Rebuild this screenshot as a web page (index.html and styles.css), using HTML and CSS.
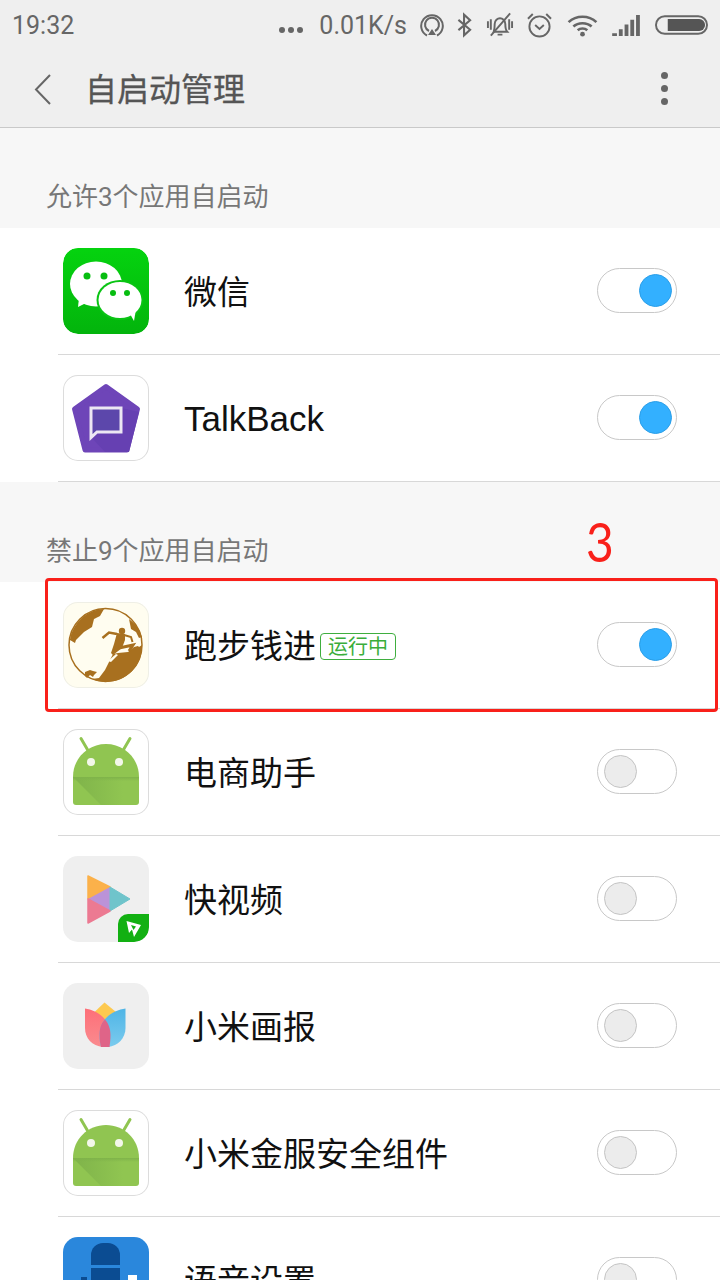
FILE: index.html
```html
<!DOCTYPE html>
<html lang="zh">
<head>
<meta charset="utf-8">
<title>自启动管理</title>
<link rel="stylesheet" href="styles.css">
</head>
<body>
<div class="screen">
  <header class="top">
    <div class="status">
      <span class="time">19:32</span>
      <div class="status-right">
        <span class="dots"><i></i><i></i><i></i></span>
        <span class="speed">0.01K/s</span>
        <svg class="si tight" width="24" height="26" viewBox="0 0 24 26"><g fill="none" stroke="#666" stroke-width="2"><path d="M7 23.500a10.800 10.800 0 1 1 10 0"/><path d="M9 19a7 7 0 1 1 6 0"/></g><path d="M12 17l4 6H8z" fill="#666"/></svg>
        <svg class="si tight" width="15" height="26" viewBox="0 0 16 26"><path d="M1.500 7.500L14 18l-6.500 6V2L14 8 1.500 18.500" fill="none" stroke="#666" stroke-width="2.200"/></svg>
        <svg class="si" width="28" height="26" viewBox="0 0 29 26"><path d="M8 20c1-3 1-6 1-8 0-4 3-6 5.500-6S20 8 20 12c0 3 0 6 2 8z" fill="none" stroke="#666" stroke-width="2"/><path d="M12 23h5M25 1L5 24" stroke="#666" stroke-width="2"/><path d="M1 9v7h2V9zM4 7v11h2V7zM23 7v11h2V7zM26 9v7h2V9z" fill="#666"/></svg>
        <svg class="si tight" width="25" height="27" viewBox="0 0 26 28"><circle cx="13" cy="15" r="10.500" fill="none" stroke="#666" stroke-width="2"/><path d="M8.500 13.500l4.500 4 4.500-4" fill="none" stroke="#666" stroke-width="2"/><path d="M1 7l5-5M25 7l-5-5" stroke="#666" stroke-width="2"/></svg>
        <svg class="si wide" width="31" height="23" viewBox="0 0 32 24"><g fill="none" stroke="#666" stroke-width="2.800"><path d="M1.500 8.500c8-7.500 21-7.500 29 0"/><path d="M6.500 13c5-4.500 14-4.500 19 0"/><path d="M11 17c2.800-2.500 7.200-2.500 10 0"/></g><circle cx="16" cy="21" r="2.500" fill="#666"/></svg>
        <svg class="si" width="29" height="21" viewBox="0 0 30 22"><path d="M0 19h5v3H0zM7 15h4v7H7zM13 10h4v12h-4zM19 5h4v17h-4zM25 0h4v22h-4z" fill="#666"/></svg>
        <svg class="si" width="53" height="20" viewBox="0 0 54 20"><rect x="1" y="1" width="52" height="18" rx="9" fill="none" stroke="#666" stroke-width="2"/><path d="M13 4h32a6 6 0 0 1 0 12H13z" fill="#555"/></svg>
      </div>
    </div>
    <div class="toolbar">
      <svg class="back" width="17" height="31" viewBox="0 0 17 31"><path d="M16 1L2 15.500 16 30" fill="none" stroke="#666" stroke-width="2"/></svg>
      <h1 class="title">自启动管理</h1>
      <span class="more"><i></i><i></i><i></i></span>
    </div>
  </header>

  <main class="content">
    <div class="section-head">允许3个应用自启动</div>
    <section class="group">
      <div class="row">
        <svg class="icon" viewBox="0 0 86 86">
          <defs><linearGradient id="wx" x1="0" y1="0" x2="0" y2="1"><stop offset="0" stop-color="#05d30f"/><stop offset="1" stop-color="#03b40c"/></linearGradient></defs>
          <rect width="86" height="86" rx="15" fill="url(#wx)"/>
          <ellipse cx="33" cy="36" rx="26" ry="22.500" fill="#fff"/>
          <path d="M16 50l-1 9 10-5z" fill="#fff"/>
          <ellipse cx="57" cy="52" rx="23.500" ry="20" fill="#0ac414"/>
          <ellipse cx="57" cy="52" rx="21.500" ry="18" fill="#fff"/>
          <path d="M66 64l5 9 2-12z" fill="#fff"/>
          <circle cx="24" cy="28" r="3.500" fill="#07bd10"/><circle cx="41" cy="28" r="3.500" fill="#07bd10"/>
          <circle cx="50" cy="45" r="3" fill="#07bd10"/><circle cx="64" cy="45" r="3" fill="#07bd10"/>
        </svg>
        <span class="name">微信</span>
        <span class="switch on"><i></i></span>
      </div>
      <div class="row">
        <svg class="icon framed" viewBox="0 0 86 86">
          <path d="M43 11.500L74.500 34 64 75H22L11.500 34z" fill="#6e45b8" stroke="#6e45b8" stroke-width="5" stroke-linejoin="round"/>
          <path d="M58 33L76 37 66 77H42L28 62z" fill="#6640b2"/>
          <path d="M28 33h30v24H34l-6 5.500z" fill="#5c47ab" stroke="#ece7f3" stroke-width="3"/>
        </svg>
        <span class="name latin">TalkBack</span>
        <span class="switch on"><i></i></span>
      </div>
    </section>

    <div class="section-head">禁止9个应用自启动</div>
    <section class="group">
      <div class="row">
        <svg class="icon cream" viewBox="0 0 86 86">
          <circle cx="42.500" cy="43" r="36.500" fill="none" stroke="#a8701f" stroke-width="1.500"/>
          <path d="M41 7l-4 7-6 3-2 8-8 5-8 8-1 3-5-3C9 22 24 7 41 7z" fill="#a8701f"/>
          <path d="M66 17c7 5 11 11 13 18l-3 1-3-6-5-3-1-5z" fill="#a8701f"/>
          <path d="M79 43c1 21-16 37-36 37-5 0-10-1-14-3l7-1 6-8 4-8 4-8 5-1 10-1 6-5 4-1 1 1z" fill="#a8701f"/>
          <circle cx="59" cy="29" r="3.200" fill="#a8701f"/>
          <path d="M54 31l8 1 0 6-3 8-9 7-2-2 3-9z" fill="#a8701f"/>
          <path d="M54 32l-8-1.500-6.500 5.500" fill="none" stroke="#a8701f" stroke-width="2.500"/>
          <path d="M61 33l7 2 1.500 5" fill="none" stroke="#a8701f" stroke-width="2"/>
          <path d="M56 46l14-3-4 6" fill="none" stroke="#a8701f" stroke-width="3"/>
          <path d="M45 59l8-7 2 1-7 7z" fill="#fffdf0"/>
          <path d="M22 70l5-2 3 1 4 1-3 3-1 2-3-2-3 3-2-2z" fill="#a8701f"/>
        </svg>
        <span class="name">跑步钱进</span>
        <span class="badge">运行中</span>
        <span class="switch on"><i></i></span>
      </div>
      <div class="row">
        <svg class="icon framed" viewBox="0 0 86 86">
          <defs>
            <linearGradient id="anshade" x1="0" y1="0" x2="1" y2="0"><stop offset="0" stop-color="#7fb34a"/><stop offset="1" stop-color="#90c551"/></linearGradient>
            <linearGradient id="anline" x1="0" y1="0" x2="0" y2="1"><stop offset="0" stop-color="#7fb34a"/><stop offset="1" stop-color="#7fb34a" stop-opacity="0"/></linearGradient>
          </defs>
          <path d="M18 9.500l7 12M67 9.500l-7 12" stroke="#90c551" stroke-width="3" stroke-linecap="round"/>
          <path d="M10 48C10 29 25 15 43 15s33 14 33 33v25a3 3 0 0 1-3 3H13a3 3 0 0 1-3-3z" fill="#90c551"/>
          <path d="M10 48h50v28H38z" fill="url(#anshade)"/>
          <path d="M10 48h66v4H10z" fill="url(#anline)"/>
          <circle cx="28" cy="33" r="4" fill="#f3f7ea"/><circle cx="56" cy="33" r="4" fill="#f3f7ea"/>
        </svg>
        <span class="name">电商助手</span>
        <span class="switch"><i></i></span>
      </div>
      <div class="row">
        <svg class="icon gray" viewBox="0 0 86 86">
          <path d="M25 20l22 11-22 12z" fill="#fbb14a" stroke="#fbb14a" stroke-linejoin="round" stroke-width="1.500"/>
          <path d="M25 43l22-12v24z" fill="#bb93d8"/>
          <path d="M47 31l20 12-20 12z" fill="#6fc4cb" stroke="#6fc4cb" stroke-linejoin="round" stroke-width="1"/>
          <path d="M25 43l22 12-22 12z" fill="#ec7a92" stroke="#ec7a92" stroke-linejoin="round" stroke-width="1.500"/>
          <path d="M55 86V68a10 10 0 0 1 10-10h21v14a14 14 0 0 1-14 14z" fill="#12b012"/>
          <path d="M63.500 65L78 69 71 81 69 73.500 66 77z" fill="#fff"/>
          <path d="M68 69l5 1.500-2.500 3.500z" fill="#12b012"/>
        </svg>
        <span class="name">快视频</span>
        <span class="switch"><i></i></span>
      </div>
      <div class="row">
        <svg class="icon gray" viewBox="0 0 86 86">
          <defs>
            <linearGradient id="tulr" x1="0" y1="0" x2="0" y2="1"><stop offset="0" stop-color="#fd6f78"/><stop offset="1" stop-color="#fa8b8f"/></linearGradient>
            <linearGradient id="tulb" x1="0" y1="0" x2="0" y2="1"><stop offset="0" stop-color="#4fb5e6"/><stop offset="1" stop-color="#7bcbee"/></linearGradient>
          </defs>
          <path d="M41.500 19.500L53 29 42 40 31.500 29z" fill="#fdc94f"/>
          <path d="M22 25.500C33 27 47 35 47.500 52 47.500 57 47 60 46.500 64H40C29 63 22 55 22 45z" fill="url(#tulr)"/>
          <path d="M62.500 25.500C51 27 36.500 35 36.500 52 36.500 57 37 60 38 64H45C55 63 62.500 55 62.500 45z" fill="url(#tulb)"/>
          <path d="M42 36.500C37.500 41 36.500 47 36.500 52 36.500 57 37 60 38 64H46.500C47 60 47.500 57 47.500 52 47.500 47 46 41 42 36.500z" fill="#df6488"/>
        </svg>
        <span class="name">小米画报</span>
        <span class="switch"><i></i></span>
      </div>
      <div class="row">
        <svg class="icon framed" viewBox="0 0 86 86">
          <path d="M18 9.500l7 12M67 9.500l-7 12" stroke="#90c551" stroke-width="3" stroke-linecap="round"/>
          <path d="M10 48C10 29 25 15 43 15s33 14 33 33v25a3 3 0 0 1-3 3H13a3 3 0 0 1-3-3z" fill="#90c551"/>
          <path d="M10 48h50v28H38z" fill="url(#anshade)"/>
          <path d="M10 48h66v4H10z" fill="url(#anline)"/>
          <circle cx="28" cy="33" r="4" fill="#f3f7ea"/><circle cx="56" cy="33" r="4" fill="#f3f7ea"/>
        </svg>
        <span class="name">小米金服安全组件</span>
        <span class="switch"><i></i></span>
      </div>
      <div class="row">
        <svg class="icon blue" viewBox="0 0 86 86">
          <path d="M28 28V18A12 12 0 0 1 40 6h5A12 12 0 0 1 57 18v10z" fill="#0b4c92"/>
          <path d="M28 31h29v55H28z" fill="#0b4c92"/>
          <path d="M18 40h6v46h-6z" fill="#0b4c92"/>
          <path d="M65 38h9v48h-9z" fill="#fff"/>
        </svg>
        <span class="name">语音设置</span>
        <span class="switch"><i></i></span>
      </div>
    </section>
  </main>

  <div class="mark"></div>
  <div class="mark-num">3</div>
</div>
</body>
</html>
```
FILE: styles.css
```css
* { box-sizing: border-box; }
html, body { margin: 0; padding: 0; }
body { background: #fff; font-family: Roboto, "Noto Sans CJK SC", sans-serif; }
.screen { position: relative; width: 720px; height: 1280px; overflow: hidden; }

.top { background: #efefef; height: 128px; border-bottom: 1px solid #c9c9c9; color: #666; }
.status { height: 50px; display: flex; align-items: center; justify-content: space-between; padding: 0 12px; }
.time { font-size: 25px; color: #666; }
.status-right { display: flex; align-items: center; gap: 14px; }
.dots { display: flex; gap: 3px; padding-top: 10px; margin-right: 2px; }
.dots i { width: 6px; height: 6px; border-radius: 50%; background: #666; }
.speed { font-size: 25px; color: #666; }
.si { display: block; flex: none; }
.tight { margin-left: -1px; }
.wide { margin-left: 1px; }

.toolbar { height: 77px; display: flex; align-items: center; padding: 0 0 0 34px; }
.back { display: block; flex: none; margin-top: 1px; }
.title { margin: 2px 0 0 34px; font-size: 32px; font-weight: 400; line-height: 1; color: #555; -webkit-text-stroke: .3px #555; }
.more { margin-left: auto; margin-right: 52px; display: flex; flex-direction: column; gap: 6px; }
.more i { width: 7px; height: 7px; border-radius: 50%; background: #666; }

.section-head { height: 100px; background: #f7f7f7; display: flex; align-items: flex-end; padding: 0 0 15px 46px; font-size: 26px; line-height: 1.2; color: #777; }
.group { background: #fff; }
.row { position: relative; height: 127px; display: flex; align-items: center; padding-left: 63px; }
.row::after { content: ""; position: absolute; left: 58px; right: 0; bottom: 0; height: 1px; background: #d8d8d8; }
.icon { display: block; flex: none; width: 86px; height: 86px; margin-top: -2px; border-radius: 15px; overflow: hidden; }
.framed { background: #fff; box-shadow: inset 0 0 0 1px #dcdcdc; }
.cream { background: #fffdf0; box-shadow: inset 0 0 0 1px #efefe6; }
.gray { background: #efefef; }
.blue { background: #2a87dc; }
.name { margin: 1px 0 0 35px; font-size: 33px; line-height: 1; color: #111; }
.latin { margin-top: 0; font-family: "Liberation Sans", sans-serif; font-size: 35px; }
.badge { margin: 2px 0 0 4px; height: 27px; padding: 0 7px; display: flex; align-items: center; border: 1px solid #3fae3f; border-radius: 4px; font-size: 20px; line-height: 1; color: #3aad3a; }
.switch { position: absolute; left: 597px; top: 40px; width: 80px; height: 45px; border: 1px solid #c8c8c8; border-radius: 23px; background: #fff; }
.switch i { position: absolute; left: 6px; top: 5px; width: 33px; height: 33px; border-radius: 50%; background: #ececec; border: 1px solid #c4c4c4; }
.switch.on i { left: 41px; background: #33b0ff; border-color: #2a9ee8; }

.mark { position: absolute; left: 45px; top: 578px; width: 673px; height: 134px; border: 3px solid #f9201a; border-radius: 4px; }
.mark-num { position: absolute; left: 586px; top: 508px; font-family: Lato, sans-serif; font-size: 55px; line-height: 66px; color: #f9201a; transform: scaleX(.87); transform-origin: left center; }
```
